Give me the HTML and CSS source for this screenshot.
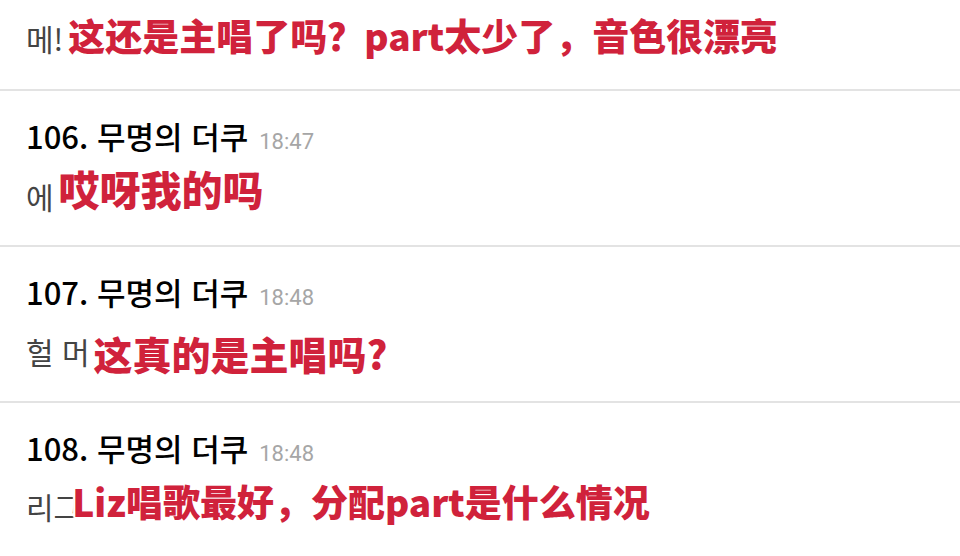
FILE: index.html
```html
<!DOCTYPE html>
<html lang="ko">

<head>
    <meta charset="UTF-8">
    <meta name="viewport" content="width=device-width, initial-scale=1.0">
    <title>댓글</title>
    <link rel="stylesheet" href="styles.css">
</head>

<body>
    <ul class="comments">
        <li class="comment comment-cut">
            <p class="comment-body">
                <span class="text">메!</span>
                <span class="sub sub-105" lang="zh-cn">这还是主唱了吗？part太少了，音色很漂亮</span>
            </p>
        </li>
        <li class="comment">
            <div class="comment-head">
                <span class="name">106. 무명의 더쿠</span>
                <span class="time">18:47</span>
            </div>
            <p class="comment-body">
                <span class="text">에</span>
                <span class="sub sub-106" lang="zh-cn">哎呀我的吗</span>
            </p>
        </li>
        <li class="comment">
            <div class="comment-head">
                <span class="name">107. 무명의 더쿠</span>
                <span class="time">18:48</span>
            </div>
            <p class="comment-body">
                <span class="text">헐 머</span>
                <span class="sub sub-107" lang="zh-cn">这真的是主唱吗?</span>
            </p>
        </li>
        <li class="comment">
            <div class="comment-head">
                <span class="name">108. 무명의 더쿠</span>
                <span class="time">18:48</span>
            </div>
            <p class="comment-body">
                <span class="text">리그</span>
                <span class="sub sub-108" lang="zh-cn">Liz唱歌最好，分配part是什么情况</span>
            </p>
        </li>
    </ul>
</body>

</html>
```

FILE: styles.css
```css
html,
body {
    margin: 0;
    background: #fff;
    overflow: hidden;
}

.comments {
    list-style: none;
    margin: 0;
    padding: 0;
}

.comment {
    padding: 26px 26px 30px;
    border-bottom: 2px solid #e3e3e3;
}

.comment-cut {
    padding-top: 11px;
}

.comment-head {
    height: 38px;
    line-height: 38px;
    white-space: nowrap;
}

.name {
    font-family: "Noto Sans CJK KR", sans-serif;
    font-size: 31px;
    font-weight: 500;
    color: #000;
}

.time {
    font-family: Roboto, "Liberation Sans", sans-serif;
    font-size: 22px;
    color: #a6a6a6;
    margin-left: 7px;
}

.comment-body {
    margin: 12px 0 0;
    height: 48px;
    line-height: 48px;
    white-space: nowrap;
}

.comment-cut .comment-body {
    margin-top: 0;
}

.text {
    font-family: "Noto Sans CJK KR", sans-serif;
    font-size: 30px;
    color: #444;
}

/* 字幕 */
.sub {
    position: relative;
    font-family: "Noto Sans CJK SC", sans-serif;
    font-weight: 900;
    color: #d0223b;
    text-shadow: 2px 0 1px #fff, -2px 0 1px #fff, 0 2px 1px #fff, 0 -2px 1px #fff,
        2px 2px 1px #fff, -2px -2px 1px #fff, 2px -2px 1px #fff, -2px 2px 1px #fff;
}

.sub-105 {
    font-size: 37px;
    top: 0;
    margin-left: 1px;
}

.sub-106 {
    font-size: 41px;
    top: -3px;
    margin-left: 1px;
}

.sub-107 {
    font-size: 39px;
    top: 6px;
    margin-left: 0;
}

.sub-108 {
    font-size: 37px;
    top: -2px;
    margin-left: -13px;
}
```
